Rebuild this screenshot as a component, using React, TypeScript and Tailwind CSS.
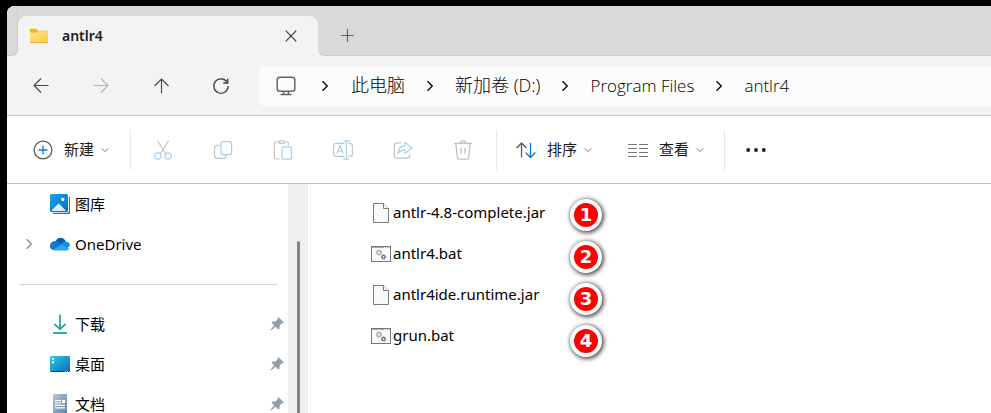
import React from "react";
import { clsx } from "clsx";

const crumbs = ["此电脑", "新加卷 (D:)", "Program Files", "antlr4"];

const files = [
  { name: "antlr-4.8-complete.jar", type: "jar" },
  { name: "antlr4.bat", type: "bat" },
  { name: "antlr4ide.runtime.jar", type: "jar" },
  { name: "grun.bat", type: "bat" },
];

const isLatin = (text: string) => /^[\x20-\x7e]+$/.test(text);

/* ---------- navigation icons ---------- */

function ArrowIcon({ className }: { className?: string }) {
  return (
    <svg
      className={className}
      width="16"
      height="16"
      viewBox="0 0 16 16"
      fill="none"
      stroke="currentColor"
      strokeWidth="1.1"
    >
      <path d="M15.5 7.5H1M8 .5l-7 7 7 7" />
    </svg>
  );
}

function RefreshIcon() {
  return (
    <svg width="18" height="18" viewBox="0 0 18 18" fill="none" stroke="currentColor" strokeWidth="1.3">
      <path d="M15.6 6.2A7.2 7.2 0 1 0 16.2 9" />
      <path d="M15.7 1.6v4.4h-4.4" />
    </svg>
  );
}

function MonitorIcon() {
  return (
    <svg width="20" height="20" viewBox="0 0 20 20" fill="none" stroke="#666" strokeWidth="1.5">
      <rect x="1.2" y="1.2" width="17.6" height="14" rx="2.5" />
      <path d="M7.6 15.5V18M12.4 15.5V18M4.5 18.4h11" />
    </svg>
  );
}

function ChevronRight({ className }: { className?: string }) {
  return (
    <svg
      className={className}
      width="12"
      height="12"
      viewBox="0 0 12 12"
      fill="none"
      stroke="currentColor"
      strokeWidth="1.3"
    >
      <path d="M3.5 1.2 8.3 6l-4.800 4.800" />
    </svg>
  );
}

function ChevronDown() {
  return (
    <svg width="8" height="8" viewBox="0 0 8 8" fill="none" stroke="#777" strokeWidth="1">
      <path d="M.8 2.4 4 5.6l3.2-3.2" />
    </svg>
  );
}

function FolderIcon() {
  return (
    <svg width="20" height="20" viewBox="0 0 20 20">
      <defs>
        <linearGradient id="folder" x1="0" y1="0" x2="1" y2="1">
          <stop offset="0" stopColor="#ffe59a" />
          <stop offset="1" stopColor="#ffc935" />
        </linearGradient>
      </defs>
      <path d="M1 3.6c0-.5.4-.9.9-.9h5.3L9 4.8h9.2c.5 0 .8.3.8.8V9H1z" fill="#f9b418" />
      <path d="M1 6.6h6.6L9 5.3h10v11.2H1z" fill="url(#folder)" />
      <path d="M1 16.2h18v.9H1z" fill="#e5a11c" />
    </svg>
  );
}

/* ---------- toolbar icons ---------- */

function NewIcon() {
  return (
    <svg width="20" height="20" viewBox="0 0 20 20" fill="none">
      <circle cx="10" cy="10" r="8.9" stroke="#5c5c5c" strokeWidth="1.3" />
      <path d="M10 5.6v8.8M5.6 10h8.8" stroke="#0a78d4" strokeWidth="1.3" />
    </svg>
  );
}

function CutIcon() {
  return (
    <svg width="20" height="20" viewBox="0 0 20 20" fill="none" strokeWidth="1.2">
      <path d="M4.4.8 12.900 14M15.600.8 7.100 14" stroke="#c4c4c4" />
      <circle cx="4.8" cy="16" r="3.2" stroke="#a0d0f2" />
      <circle cx="15.2" cy="16" r="3.2" stroke="#a0d0f2" />
    </svg>
  );
}

function CopyIcon() {
  return (
    <svg width="20" height="20" viewBox="0 0 20 20" fill="none" strokeWidth="1.2">
      <path d="M6.5 5.4H4.2a2.6 2.6 0 0 0-2.6 2.6v7.6a2.8 2.8 0 0 0 2.8 2.8h6a2.6 2.6 0 0 0 2.6-2.6v-.6" stroke="#c4c4c4" />
      <rect x="8" y="1.6" width="10.6" height="13" rx="2.4" stroke="#a0d0f2" />
    </svg>
  );
}

function PasteIcon() {
  return (
    <svg width="20" height="20" viewBox="0 0 20 20" fill="none" strokeWidth="1.2">
      <path d="M6 2H2.6c-.8 0-1.2.4-1.2 1.2v14.6c0 .8.4 1.2 1.2 1.2H7M11.8 2h2.4c.8 0 1.2.4 1.2 1.2V5" stroke="#c4c4c4" />
      <rect x="5.6" y=".8" width="6.2" height="2.6" rx="1.3" stroke="#c4c4c4" />
      <rect x="9" y="6.8" width="9.4" height="12.4" rx="1.4" stroke="#a0d0f2" />
    </svg>
  );
}

function RenameIcon() {
  return (
    <svg width="20" height="20" viewBox="0 0 20 20" fill="none" strokeWidth="1.2">
      <path d="M11.4 3.4H3.2A2.6 2.6 0 0 0 .6 6v7.8a2.6 2.6 0 0 0 2.6 2.6h8.2M15.4 3.4h1.4A2.6 2.6 0 0 1 19.4 6v7.8a2.6 2.6 0 0 1-2.6 2.6h-1.4" stroke="#c4c4c4" />
      <path d="M10.4.8h6M10.4 19.2h6M13.4.8v18.4M3.8 13.6 7 5.8l3.2 7.8M4.9 11h4.2" stroke="#a0d0f2" />
    </svg>
  );
}

function ShareIcon() {
  return (
    <svg width="20" height="20" viewBox="0 0 20 20" fill="none" strokeWidth="1.2" strokeLinejoin="round">
      <path d="M8.5 2.8H4.2a2.8 2.8 0 0 0-2.8 2.8v9.8a2.8 2.8 0 0 0 2.8 2.8h9.6a2.8 2.8 0 0 0 2.8-2.8v-1.2" stroke="#c4c4c4" />
      <path d="M12 2.4 19 8l-7 5.4v-3.2c-3.4 0-5.6 1-7 3.2.2-4.4 2.6-7.4 7-7.8z" stroke="#a0d0f2" />
    </svg>
  );
}

function TrashIcon() {
  return (
    <svg width="20" height="20" viewBox="0 0 20 20" fill="none" stroke="#c0c0c0" strokeWidth="1.3">
      <path d="M1 3.400h18M2.800 3.600l1.600 14c.1 1 .7 1.500 1.600 1.500h8c.9 0 1.500-.5 1.600-1.500l1.600-14M7.400 3.200a2.600 2.400 0 0 1 5.200 0M8 8v6M12 8v6" />
    </svg>
  );
}

function SortIcon() {
  return (
    <svg width="20" height="20" viewBox="0 0 20 20" fill="none" strokeWidth="1.3">
      <path d="M5.500 17.500V3M.600 8 5.500 3l4.900 5" stroke="#5c5c5c" />
      <path d="M14.500 3v14.500M9.600 12.500l4.900 5 4.900-5" stroke="#0a78d4" />
    </svg>
  );
}

function ViewIcon() {
  return (
    <svg width="20" height="20" viewBox="0 0 20 20" stroke="#777" strokeWidth="1.200">
      <path d="M0 4.500h9M11 4.500h9M0 8.500h9M11 8.500h9M0 12.500h9M11 12.500h9M0 16.500h9M11 16.500h9" />
    </svg>
  );
}

/* ---------- sidebar icons ---------- */

function GalleryIcon() {
  return (
    <svg width="20" height="20" viewBox="0 0 20 20">
      <defs>
        <linearGradient id="gallery" x1="0" y1="0" x2="1" y2="1">
          <stop offset="0" stopColor="#16a5e6" />
          <stop offset="1" stopColor="#0a6cc4" />
        </linearGradient>
        <linearGradient id="hill" x1="0" y1="0" x2="0" y2="1">
          <stop offset="0" stopColor="#fff" />
          <stop offset="1" stopColor="#cfe6fa" />
        </linearGradient>
      </defs>
      <path d="M19 2.500c.6 0 1 .5 1 1V18.500c0 1-.5 1.500-1.500 1.500H4c-.8 0-1.500-.5-1.500-1.200h14.700c1 0 1.800-.8 1.800-1.800z" fill="#2a6fb8" />
      <rect width="18" height="18" rx="1.500" fill="url(#gallery)" />
      <path d="M1.500 16.500 8.600 9.400 15.800 16.500c-.3.400-.600.500-1 .500H2.500c-.4 0-.7-.1-1-.5z" fill="url(#hill)" />
      <circle cx="12.800" cy="5.400" r="1.600" fill="#fff" />
    </svg>
  );
}

function OneDriveIcon() {
  return (
    <svg width="20" height="20" viewBox="0 0 20 20">
      <path d="M5.200 8.200C6 5.500 8 3.800 10.500 3.800c2.400 0 4.400 1.500 5.200 3.800l-4 3.900z" fill="#0a5cb8" />
      <path d="M4.600 7.300c1.300-.3 2.500 0 3.500.7l4.400 3-9.600 5C1 15.400 0 13.700 0 12c0-2.400 1.900-4.700 4.600-4.700z" fill="#1077d2" />
      <path d="M12 9.300c1.200-1.300 2.400-1.900 3.900-1.900 2.400.1 4.100 2 4.100 4.200l-3 2.900-6-3.600z" fill="#1490df" />
      <path d="m2 15.800 9.200-4.900c3 1.400 5.800 2.900 8 3.300-.7 1.500-2 2.400-3.700 2.400H4.500c-.9 0-1.800-.3-2.500-.8z" fill="#28a8ea" />
    </svg>
  );
}

function DownloadIcon() {
  return (
    <svg width="20" height="20" viewBox="0 0 20 20" fill="none" strokeWidth="1.800">
      <path d="M10 .500V15M4.500 10 10 15.300 15.500 10" stroke="#22b196" />
      <path d="M3 19h14" stroke="#1fae80" />
    </svg>
  );
}

function DesktopIcon() {
  return (
    <svg width="20" height="20" viewBox="0 0 20 20">
      <defs>
        <linearGradient id="desktop" x1="0" y1="0" x2="1" y2="1">
          <stop offset="0" stopColor="#2fd0e0" />
          <stop offset="1" stopColor="#0b67bd" />
        </linearGradient>
      </defs>
      <rect y="2" width="20" height="16" rx="1.200" fill="url(#desktop)" />
      <path d="M.3 17h19.400c-.2.600-.600 1-1.200 1h-17c-.6 0-1-.4-1.200-1z" fill="#0b4a80" />
      <path d="M2 4h2v2H2zM2 7.200h2v2H2z" fill="#fff" />
      <path d="M15 17h1v1h-1zM17 17h1v1h-1z" fill="#cde" />
    </svg>
  );
}

function DocumentIcon() {
  return (
    <svg width="20" height="20" viewBox="0 0 20 20">
      <defs>
        <linearGradient id="doc" x1="0" y1="0" x2="1" y2="1">
          <stop offset="0" stopColor="#b3c6d9" />
          <stop offset="1" stopColor="#5f83a8" />
        </linearGradient>
      </defs>
      <rect x="3" width="14" height="20" rx="1.200" fill="url(#doc)" />
      <path d="M5 6h6v1.200H5zM5 8.400h6v1.200H5zM5 10.800h10V12H5zM5 13.200h10v1.200H5zM12 6h3v3h-3z" fill="#fff" />
    </svg>
  );
}

function PinIcon() {
  return (
    <svg width="14" height="14" viewBox="0 0 14 14" fill="#929da5">
      <path d="M8.600.300 13.700 5.300l-1.100 1-.9-.1-2.200 2.500.1 2.700-1.200 1.200-2.800-2.800L.900 13.500l-.5-.5 3.800-4.800L1.500 5.700l1.200-1.200 2.700.1 2.400-2.300-.1-.9z" />
    </svg>
  );
}

/* ---------- file icons ---------- */

function JarIcon() {
  return (
    <svg width="20" height="20" viewBox="0 0 20 20" fill="#f9f9f9" stroke="#7a7a7a">
      <path d="M2.500.500h10l5 5v14h-15z" />
      <path d="M12.500.500v5h5" fill="#fff" />
    </svg>
  );
}

function BatIcon() {
  return (
    <svg width="20" height="20" viewBox="0 0 20 20" fill="none">
      <rect x=".5" y="2.500" width="19" height="15" fill="#fafafa" stroke="#777" />
      <path d="M1 3.500h18" stroke="#aaa" />
      <path d="M13 3.500h1M15 3.500h1M17 3.500h1" stroke="#fff" />
      <circle cx="8" cy="8.500" r="1.900" stroke="#9aa9b6" strokeWidth="1.200" />
      <circle cx="8" cy="8.500" r="2.800" stroke="#9aa9b6" strokeDasharray="1.100 1.100" />
      <circle cx="12.500" cy="13" r="1.500" stroke="#56616b" strokeWidth="1.100" />
      <circle cx="12.500" cy="13" r="2.200" stroke="#56616b" strokeDasharray=".860 .860" />
    </svg>
  );
}

const editActions = [
  { label: "剪切", icon: <CutIcon /> },
  { label: "复制", icon: <CopyIcon /> },
  { label: "粘贴", icon: <PasteIcon /> },
  { label: "重命名", icon: <RenameIcon /> },
  { label: "共享", icon: <ShareIcon /> },
  { label: "删除", icon: <TrashIcon /> },
];

const places = [
  { label: "下载", icon: <DownloadIcon /> },
  { label: "桌面", icon: <DesktopIcon /> },
  { label: "文档", icon: <DocumentIcon /> },
];

function MenuButton({ label, icon }: { label: string; icon: React.ReactNode }) {
  return (
    <button className="flex h-10 items-center text-[15px]">
      {icon}
      <span className="ml-[11px] mr-[7px]">{label}</span>
      <ChevronDown />
    </button>
  );
}

function Separator() {
  return <div className="h-10 w-px shrink-0 bg-[#e8e8e8]" />;
}

function NavButton({ label, disabled, children }: { label: string; disabled?: boolean; children: React.ReactNode }) {
  return (
    <button
      aria-label={label}
      disabled={disabled}
      className="flex size-10 shrink-0 items-center justify-center text-[#444] disabled:text-[#b5b5b5]"
    >
      {children}
    </button>
  );
}

function SidebarItem({
  label,
  icon,
  expandable,
  pinned,
}: {
  label: string;
  icon: React.ReactNode;
  expandable?: boolean;
  pinned?: boolean;
}) {
  return (
    <a href="#" className="flex h-10 shrink-0 items-center pl-4 pr-1">
      <span className="w-[27px] text-[#888]">{expandable && <ChevronRight />}</span>
      {icon}
      <span className="ml-[5px] flex-1">{label}</span>
      {pinned && <PinIcon />}
    </a>
  );
}

function TabStrip() {
  return (
    <div className="flex h-[50px] shrink-0 items-end bg-[#d9d9d9]">
      <div className="flex h-full w-[11px] items-end bg-[#f3f3f3]">
        <div className="h-full w-full rounded-br-md border-b border-r border-[#cdcdcd] bg-[#d9d9d9]" />
      </div>
      <div className="flex h-full items-end bg-[#d9d9d9]">
        <div className="flex h-10 w-[300px] items-center rounded-t-[9px] bg-[#f3f3f3] pl-[11px] pr-[17px]">
          <FolderIcon />
          <span className="ml-[13px] flex-1 text-sm font-semibold">antlr4</span>
          <button aria-label="关闭标签页" className="flex size-5 items-center justify-center">
            <svg width="12" height="12" viewBox="0 0 12 12" stroke="#333" strokeWidth="1.100">
              <path d="m.700.700 10.600 10.600M11.300.700.700 11.300" />
            </svg>
          </button>
        </div>
      </div>
      <div className="h-10 flex-1 bg-[#f3f3f3]">
        <div className="flex h-10 items-center rounded-bl-md border-b border-[#cdcdcd] bg-[#d9d9d9] pl-[19px]">
          <button aria-label="新建标签页" className="flex size-5 items-center justify-center">
            <svg width="13" height="13" viewBox="0 0 13 13" stroke="#666" strokeWidth="1.200">
              <path d="M6.500 0v13M0 6.500h13" />
            </svg>
          </button>
        </div>
      </div>
    </div>
  );
}

export default function App() {
  return (
    <div className="h-screen overflow-hidden bg-black pl-[7px] pt-[6px] font-['Noto_Sans','Noto_Sans_CJK_SC',sans-serif] text-[15px] text-[#1b1b1b]">
      <div className="flex h-full flex-col overflow-hidden rounded-tl-lg bg-white">
        <TabStrip />

        <nav className="flex h-[60px] shrink-0 items-center border-b border-[#c4c4c4] bg-[#f3f3f3] pl-[14px]">
          <div className="flex gap-5">
            <NavButton label="后退">
              <ArrowIcon />
            </NavButton>
            <NavButton label="前进" disabled>
              <ArrowIcon className="-scale-x-100" />
            </NavButton>
            <NavButton label="向上">
              <ArrowIcon className="rotate-90" />
            </NavButton>
            <NavButton label="刷新">
              <RefreshIcon />
            </NavButton>
          </div>
          <div className="ml-[18px] flex h-10 flex-1 items-center rounded-l-md bg-[#fcfcfc] pl-[17px] font-['Open_Sans','Noto_Sans_CJK_SC',sans-serif] font-light text-black">
            <MonitorIcon />
            {crumbs.map((crumb, index) => (
              <React.Fragment key={crumb}>
                <span className={clsx("flex justify-center", index === 0 ? "ml-[3px] w-[52px]" : "w-[50px]")}>
                  <ChevronRight />
                </span>
                <a href="#" className={clsx("whitespace-nowrap", isLatin(crumb) ? "text-[17px]" : "text-[18px]")}>
                  {crumb}
                </a>
              </React.Fragment>
            ))}
          </div>
        </nav>

        <div className="flex h-[68px] shrink-0 items-center border-b border-[#c4c4c4] pl-[26px]">
          <MenuButton label="新建" icon={<NewIcon />} />
          <div className="w-[21px]" />
          <Separator />
          <div className="flex gap-5 pl-3 pr-[13px]">
            {editActions.map((action) => (
              <button
                key={action.label}
                aria-label={action.label}
                disabled
                className="flex size-10 items-center justify-center"
              >
                {action.icon}
              </button>
            ))}
          </div>
          <Separator />
          <div className="flex gap-9 pl-[19px] pr-5">
            <MenuButton label="排序" icon={<SortIcon />} />
            <MenuButton label="查看" icon={<ViewIcon />} />
          </div>
          <Separator />
          <button aria-label="更多" className="ml-[11px] flex size-10 items-center justify-center">
            <svg width="20" height="20" viewBox="0 0 20 20" fill="#1b1b1b">
              <circle cx="2.200" cy="10" r="1.900" />
              <circle cx="10" cy="10" r="1.900" />
              <circle cx="17.800" cy="10" r="1.900" />
            </svg>
          </button>
        </div>

        <div className="flex min-h-0 flex-1 text-black">
          <aside className="flex w-[281px] shrink-0 flex-col overflow-hidden">
            <SidebarItem label="图库" icon={<GalleryIcon />} />
            <SidebarItem label="OneDrive" icon={<OneDriveIcon />} expandable />
            <div className="flex h-10 shrink-0 items-center pl-[13px] pr-[11px]">
              <hr className="w-full border-[#d2d2d2]" />
            </div>
            {places.map((place) => (
              <SidebarItem key={place.label} label={place.label} icon={place.icon} pinned />
            ))}
          </aside>
          <div className="flex w-5 shrink-0 justify-center bg-[#efefef] pt-[57px]">
            <div className="w-[3px] rounded-t-full bg-[#858585]" />
          </div>

          <main className="relative ml-0.5 flex-1 border-l border-[#f3f3f3] pl-[60px] pt-2">
            <ul>
              {files.map((file) => (
                <li key={file.name}>
                  <a href="#" className="flex h-[41px] items-center gap-0.5">
                    {file.type === "jar" ? <JarIcon /> : <BatIcon />}
                    {file.name}
                  </a>
                </li>
              ))}
            </ul>
            {/* numbered callouts over the list */}
            <div className="absolute left-[259px] top-[15px] flex flex-col gap-[10px]">
              {files.map((file, index) => (
                <span
                  key={file.name}
                  className="flex size-8 items-center justify-center rounded-full border-4 border-white bg-[#fe0000] font-['DejaVu_Sans',sans-serif] text-lg font-bold text-white shadow-[1px_1px_4px_1px_rgba(0,0,0,0.7)]"
                >
                  {index + 1}
                </span>
              ))}
            </div>
          </main>
        </div>
      </div>
    </div>
  );
}
